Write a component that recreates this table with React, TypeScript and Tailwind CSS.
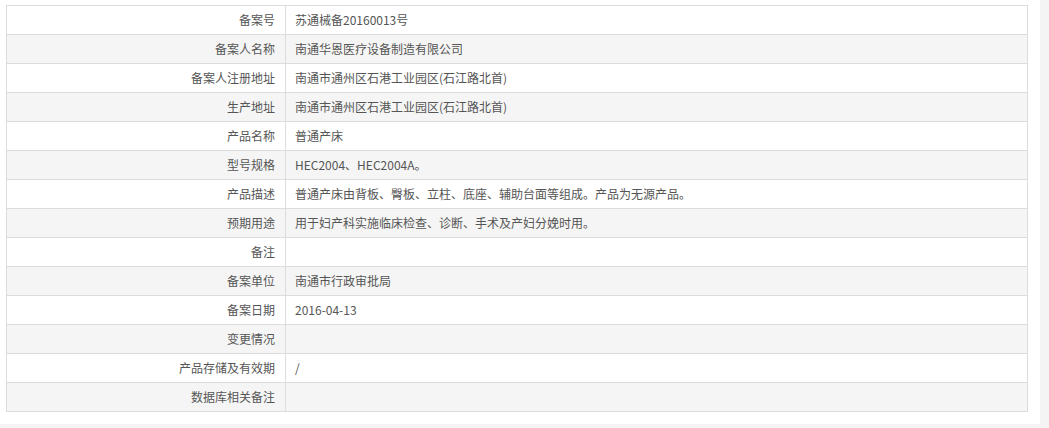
import React from 'react';

const rows: [string, string][] = [
  ['备案号', '苏通械备20160013号'],
  ['备案人名称', '南通华恩医疗设备制造有限公司'],
  ['备案人注册地址', '南通市通州区石港工业园区(石江路北首)'],
  ['生产地址', '南通市通州区石港工业园区(石江路北首)'],
  ['产品名称', '普通产床'],
  ['型号规格', 'HEC2004、HEC2004A。'],
  ['产品描述', '普通产床由背板、臀板、立柱、底座、辅助台面等组成。产品为无源产品。'],
  ['预期用途', '用于妇产科实施临床检查、诊断、手术及产妇分娩时用。'],
  ['备注', ''],
  ['备案单位', '南通市行政审批局'],
  ['备案日期', '2016-04-13'],
  ['变更情况', ''],
  ['产品存储及有效期', '/'],
  ['数据库相关备注', ''],
];

export default function App() {
  return (
    <div className="w-[1049px] h-[428px] bg-[#f4f4f4] overflow-hidden" style={{ fontFamily: '"Noto Sans CJK SC", "Noto Sans", sans-serif' }}>
      <div className="w-[1040px] h-[424px] bg-white pl-[6px] pt-[5px]">
        <table className="w-[1022px] border-collapse border border-[#c4c4c4] text-[12px] text-[#555]">
          <tbody>
            {rows.map(([label, value], i) => (
              <tr key={label} className={i % 2 === 1 ? 'bg-[#f5f5f5]' : 'bg-white'}>
                <td className="w-[279px] h-[29px] border border-[#dcdcdc] text-right pr-[10px] leading-[28px] p-0">
                  {label}
                </td>
                <td className="h-[29px] border border-[#dcdcdc] pl-[9px] leading-[28px] p-0">{value}</td>
              </tr>
            ))}
          </tbody>
        </table>
      </div>
    </div>
  );
}
